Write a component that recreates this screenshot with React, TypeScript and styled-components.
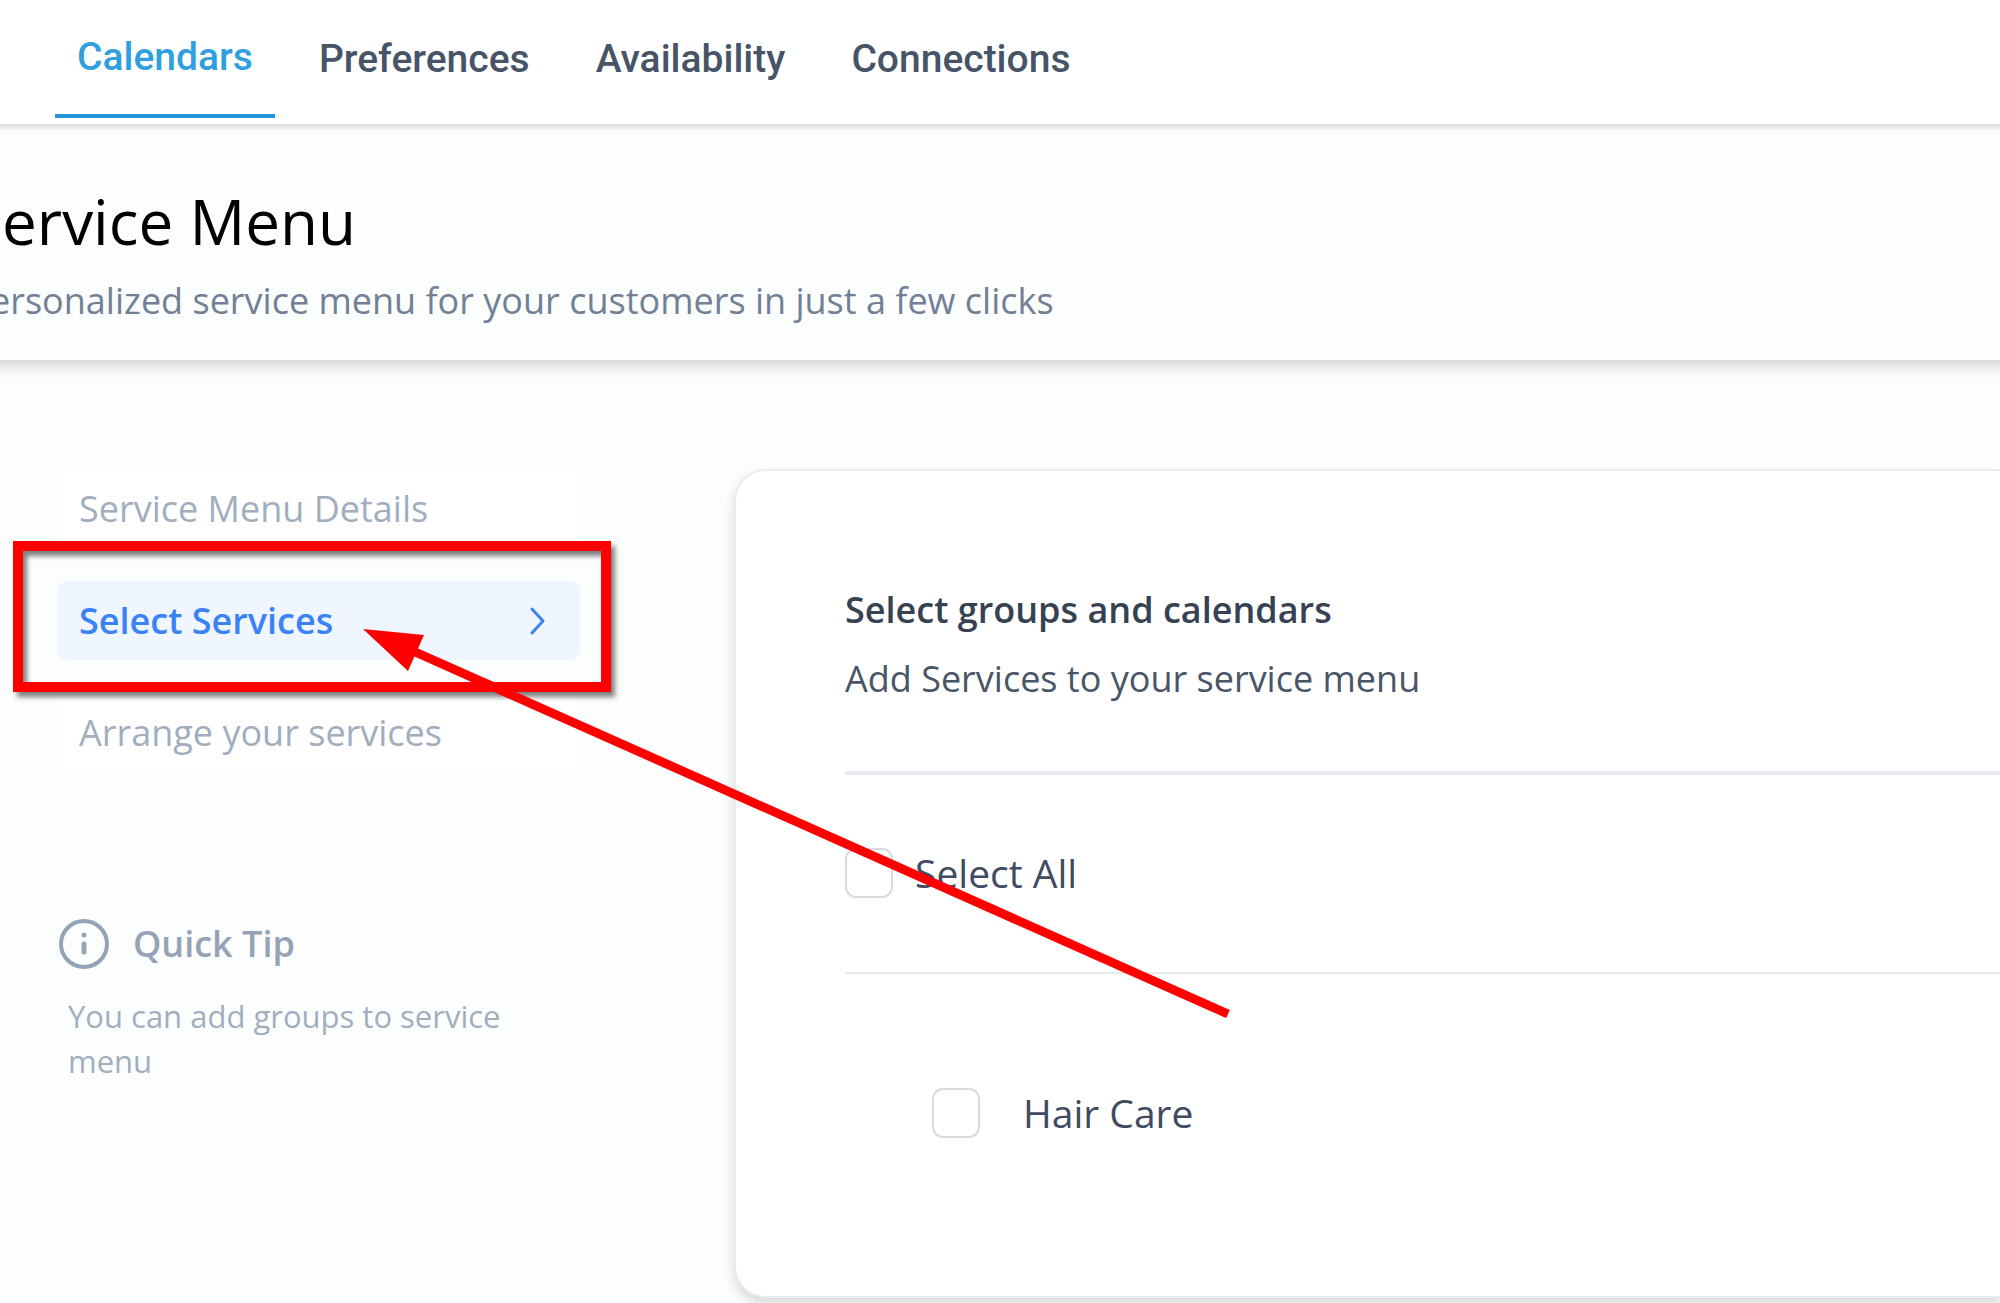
import React, { useState } from "react";
import styled, { createGlobalStyle } from "styled-components";

const GlobalStyle = createGlobalStyle`
  *, *::before, *::after { box-sizing: border-box; }
  body { margin: 0; background: #fcfefd; }
  h1, h2, h3, p { margin: 0; font-weight: 400; }
`;

const Page = styled.div`
  min-height: 100vh;
  overflow: hidden;
  padding-bottom: 4px;
  background: #fcfefd;
  font-family: "Open Sans", "Noto Sans", sans-serif;
  font-size: 36px;
  line-height: 52px;
  color: #4a5568;
`;

const TopBar = styled.nav`
  position: relative;
  display: flex;
  gap: 22px;
  margin: 0 -16px;
  padding: 0 71px 6px;
  background: #ffffff;
  box-shadow: 0 2px 8px rgba(0, 0, 0, 0.2);
`;

const Tab = styled.a<{ $active?: boolean }>`
  display: flex;
  align-items: center;
  height: 118px;
  padding: 0 22px;
  border-bottom: ${(p) => (p.$active ? "4px solid #2196db" : "0")};
  font-family: Roboto, sans-serif;
  font-size: 39px;
  font-weight: 500;
  color: ${(p) => (p.$active ? "#2f9fe0" : "#475467")};
  text-decoration: none;
`;

const Hero = styled.header`
  margin: 0 -32px;
  padding: 61px 0 33px;
  white-space: nowrap;
  box-shadow: 0 4px 16px rgba(0, 0, 0, 0.2);
`;

const Title = styled.h1`
  font-size: 62px;
  line-height: 72px;
  color: #000000;
`;

const Subtitle = styled.p`
  margin-top: 18px;
  color: #718096;
`;

const Workspace = styled.main`
  display: flex;
  align-items: flex-start;
  gap: 154px;
  padding: 109px 0 0 57px;
`;

const Sidebar = styled.aside`
  flex: 0 0 523px;
`;

const Steps = styled.div`
  display: flex;
  flex-direction: column;
  gap: 33px;
`;

const Step = styled.button<{ $active?: boolean }>`
  display: flex;
  align-items: center;
  justify-content: space-between;
  width: 100%;
  height: 79px;
  padding: 0 32px 0 22px;
  border: 0;
  border-radius: 10px;
  background: ${(p) => (p.$active ? "#eff6ff" : "#ffffff")};
  font: inherit;
  font-weight: ${(p) => (p.$active ? 600 : 400)};
  color: ${(p) => (p.$active ? "#3b82f6" : "#a0aec0")};
  text-align: left;
`;

const Highlighted = styled.div`
  position: relative;
`;

const RedFrame = styled.div`
  position: absolute;
  inset: -40px -31px -32px -44px;
  border: 10px solid #ff0000;
  box-shadow: 4px 5px 5px rgba(0, 0, 0, 0.5), inset 4px 5px 5px rgba(0, 0, 0, 0.5);
  pointer-events: none;
`;

const Arrow = styled.svg`
  position: absolute;
  left: 306px;
  top: 48px;
  pointer-events: none;
`;

const TipHead = styled.div`
  display: flex;
  align-items: center;
  gap: 24px;
  margin-top: 146px;
  padding-left: 2px;
  height: 52px;
  color: #94a3b8;
`;

const TipTitle = styled.h3`
  font-size: 36px;
  font-weight: 600;
`;

const TipText = styled.p`
  margin-top: 24px;
  padding-left: 11px;
  font-size: 31px;
  line-height: 45px;
  color: #a0aec0;
`;

const Card = styled.section`
  flex: 1;
  padding: 113px 0 158px 109px;
  border: 2px solid #ebecf2;
  border-right: 0;
  border-radius: 32px 0 0 32px;
  background: #ffffff;
  box-shadow: 0 6px 12px rgba(0, 0, 0, 0.15);
`;

const CardTitle = styled.h2`
  font-size: 36px;
  font-weight: 600;
  color: #364152;
`;

const CardText = styled.p`
  margin: 17px 0 66px;
`;

const Divider = styled.hr<{ $size: number }>`
  height: ${(p) => p.$size}px;
  margin: 0;
  border: 0;
  background: #e8eaf0;
`;

const Option = styled.label<{ $gap: number }>`
  display: flex;
  align-items: center;
  gap: ${(p) => p.$gap}px;
  height: 50px;
  font-size: 39px;
  color: #3f4b60;
`;

const AllRow = styled.div`
  padding: 73px 0 74px;
`;

const GroupRow = styled.div`
  padding: 114px 0 0 87px;
`;

const Checkbox = styled.input`
  appearance: none;
  width: 48px;
  height: 50px;
  margin: 0;
  border: 2px solid #d5dae3;
  border-radius: 11px;
  background: #ffffff;

  &:checked {
    border-color: #3b82f6;
    background: #3b82f6;
  }
`;

const tabs = ["Calendars", "Preferences", "Availability", "Connections"];

export default function App() {
  const [all, setAll] = useState(false);
  const [hair, setHair] = useState(false);

  return (
    <Page>
      <GlobalStyle />
      <TopBar>
        {tabs.map((name, i) => (
          <Tab key={name} href="#" $active={i === 0}>
            {name}
          </Tab>
        ))}
      </TopBar>
      <Hero>
        <Title>Service Menu</Title>
        <Subtitle>personalized service menu for your customers in just a few clicks</Subtitle>
      </Hero>
      <Workspace>
        <Sidebar>
          <Steps>
            <Step type="button">Service Menu Details</Step>
            <Highlighted>
              <Step type="button" $active>
                Select Services
                <svg width="20" height="32" viewBox="0 0 20 32" fill="none" aria-hidden="true">
                  <path d="M4 4 15 16 4 28" stroke="currentColor" strokeWidth="3" strokeLinecap="round" strokeLinejoin="round" />
                </svg>
              </Step>
              <RedFrame />
              <Arrow width="870" height="394" viewBox="0 0 870 394" aria-hidden="true">
                <path d="M0 0 61 6 45 42Z" fill="#ff0000" />
                <path d="M50 22 865 385" stroke="#ff0000" strokeWidth="9" />
              </Arrow>
            </Highlighted>
            <Step type="button">Arrange your services</Step>
          </Steps>
          <TipHead>
            <svg width="50" height="50" viewBox="0 0 50 50" fill="none" stroke="currentColor" aria-hidden="true">
              <circle cx="25" cy="25" r="23" strokeWidth="4" />
              <path d="M25 25v8" strokeWidth="5" strokeLinecap="round" />
              <circle cx="25" cy="16" r="2.5" fill="currentColor" stroke="none" />
            </svg>
            <TipTitle>Quick Tip</TipTitle>
          </TipHead>
          <TipText>You can add groups to service menu</TipText>
        </Sidebar>
        <Card>
          <CardTitle>Select groups and calendars</CardTitle>
          <CardText>Add Services to your service menu</CardText>
          <Divider $size={4} />
          <AllRow>
            <Option $gap={22}>
              <Checkbox type="checkbox" checked={all} onChange={(e) => setAll(e.target.checked)} />
              Select All
            </Option>
          </AllRow>
          <Divider $size={2} />
          <GroupRow>
            <Option $gap={43}>
              <Checkbox type="checkbox" checked={hair} onChange={(e) => setHair(e.target.checked)} />
              Hair Care
            </Option>
          </GroupRow>
        </Card>
      </Workspace>
    </Page>
  );
}
